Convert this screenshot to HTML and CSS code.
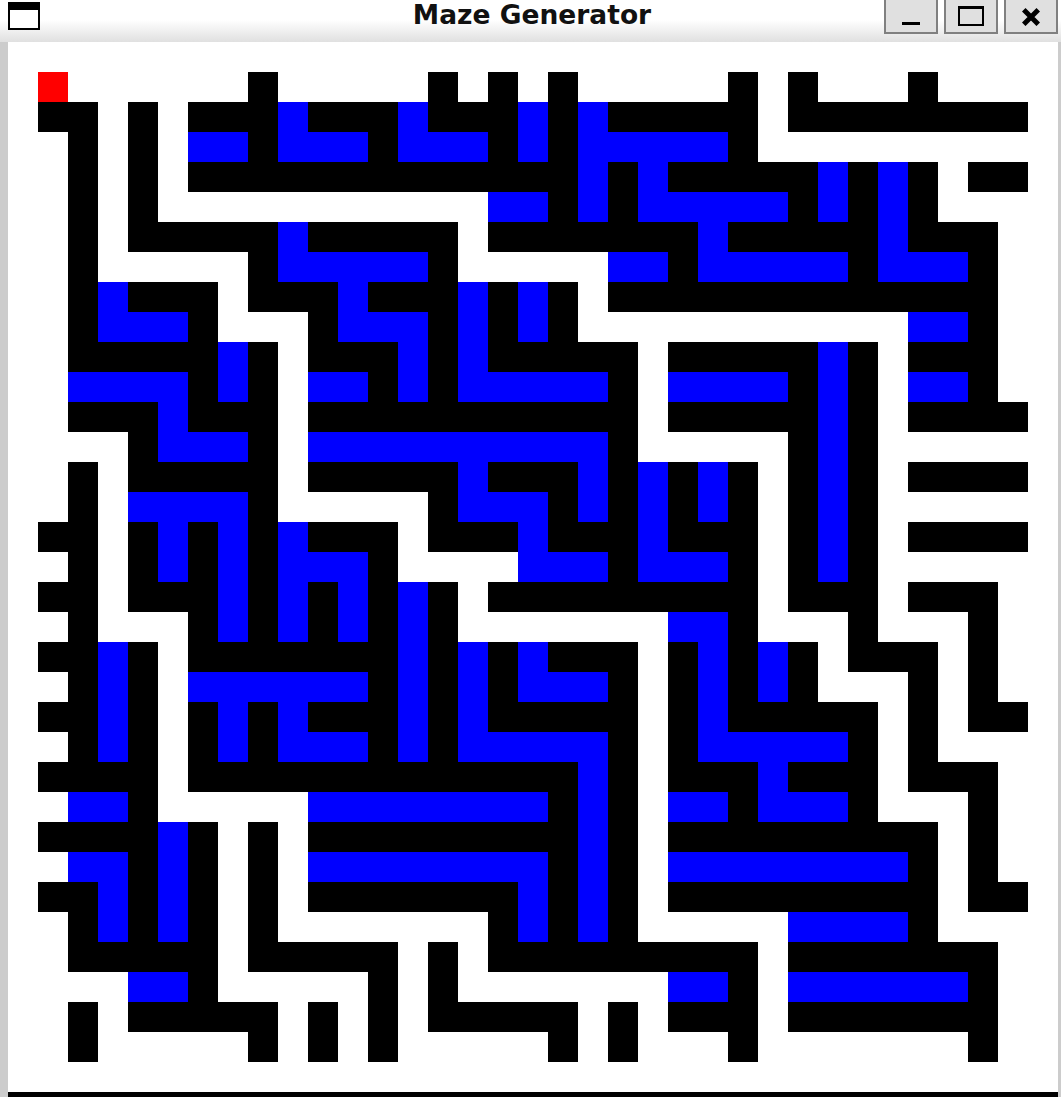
FILE: index.html
```html
<!DOCTYPE html>
<html lang="en">
<head>
    <meta charset="UTF-8">
    <meta name="viewport" content="width=device-width, initial-scale=1.0">
    <title>Maze Generator</title>
    <link rel="stylesheet" href="styles.css">
</head>
<body>
    <div class="window">
        <header class="titlebar">
            <svg class="window-icon" width="32" height="28" viewBox="0 0 32 28">
                <rect x="1" y="1" width="30" height="26" fill="#fff" stroke="#000" stroke-width="2"/>
                <rect x="0" y="0" width="32" height="8" fill="#000"/>
            </svg>
            <h1 class="title">Maze Generator</h1>
            <div class="controls">
                <button class="control">
                    <svg width="18" height="18" viewBox="0 0 18 18"><rect x="0" y="15" width="18" height="4"/></svg>
                </button>
                <button class="control">
                    <svg width="26" height="20" viewBox="0 0 26 20"><rect x="1" y="1" width="24" height="18" fill="none" stroke="#000" stroke-width="2"/><rect x="0" y="0" width="26" height="3"/></svg>
                </button>
                <button class="control">
                    <svg width="18" height="20" viewBox="0 0 18 20"><path d="M3.5 5.5 L14.5 16.5 M14.5 5.5 L3.5 16.5" stroke="#000" stroke-width="5" stroke-linecap="square" fill="none"/></svg>
                </button>
            </div>
        </header>
        <main class="content">
            <div class="canvas">
                <div class="maze" id="maze"></div>
            </div>
        </main>
    </div>
    <script src="maze.js"></script>
</body>
</html>
```

FILE: styles.css
```css
* {
    box-sizing: border-box;
}

body {
    margin: 0;
    height: 1097px;
    overflow: hidden;
    background-color: #fff;
    font-family: 'DejaVu Sans', Verdana, sans-serif;
}

.window {
    display: flex;
    flex-direction: column;
    height: 100%;
}

.titlebar {
    display: flex;
    align-items: flex-start;
    justify-content: space-between;
    position: relative;
    height: 42px;
    padding: 2px 0 0 8px;
    background: linear-gradient(to bottom, #fff 0, #fff 20px, #e0e0e0 42px);
}

.window-icon {
    display: block;
}

.title {
    position: absolute;
    left: 3px;
    right: 0;
    top: 0;
    margin: 0;
    text-align: center;
    font-size: 26.5px;
    line-height: 29px;
    font-weight: bold;
    color: #111;
}

.controls {
    display: flex;
    gap: 6px;
    margin-top: -2px;
    padding-right: 3px;
}

.control {
    display: flex;
    align-items: center;
    justify-content: center;
    width: 54px;
    height: 34px;
    padding: 0;
    border: 2px solid #808080;
    border-top: none;
    background-color: #e0e0e0;
}

.control svg {
    display: block;
}

.content {
    display: flex;
    flex: 1;
    border-left: 8px solid #ccc;
    border-right: 3px solid #ccc;
}

.canvas {
    flex: 1;
    padding: 30px 0 0 30px;
    background-color: #fff;
    border-bottom: 5px solid #000;
}

.maze {
    display: grid;
    grid-template-columns: repeat(33, 30px);
    grid-auto-rows: 30px;
}

.wall {
    background-color: #000;
}

.path {
    background-color: #00f;
}

.start {
    background-color: #f00;
}
```

FILE: maze.js
```js
// # wall, B solved path, R start, . open
const rows = [
    'R......#.....#.#.#.....#.#...#...',
    '##.#.###B###B###B#B#####.########',
    '.#.#.BB#BBB#BBB#B#BBBBB#.........',
    '.#.#.#############B#B#####B#B#.##',
    '.#.#...........BB#B#BBBBB#B#B#...',
    '.#.#####B#####.#######B#####B###.',
    '.#.....#BBBBB#.....BB#BBBBB#BBB#.',
    '.#B###.###B###B#B#.#############.',
    '.#BBB#...#BBB#B#B#...........BB#.',
    '.#####B#.###B#B#####.#####B#.###.',
    '.BBBB#B#.BB#B#BBBBB#.BBBB#B#.BB#.',
    '.###B###.###########.#####B#.####',
    '...#BBB#.BBBBBBBBBB#.....#B#.....',
    '.#.#####.#####B###B#B#B#.#B#.####',
    '.#.BBBB#.....#BBB#B#B#B#.#B#.....',
    '##.#B#B#B###.###B###B###.#B#.####',
    '.#.#B#B#BBB#....BBB#BBB#.#B#.....',
    '##.###B#B#B#B#.#########.###.###.',
    '.#...#B#B#B#B#.......BB#...#...#.',
    '##B#.#######B#B#B###.#B#B#.###.#.',
    '.#B#.BBBBBB#B#B#BBB#.#B#B#...#.#.',
    '##B#.#B#B###B#B#####.#B#####.#.##',
    '.#B#.#B#BBB#B#BBBBB#.#BBBBB#.#...',
    '####.#############B#.###B###.###.',
    '.BB#.....BBBBBBBB#B#.BB#BBB#...#.',
    '####B#.#.#########B#.#########.#.',
    '.BB#B#.#.BBBBBBBB#B#.BBBBBBBB#.#.',
    '##B#B#.#.#######B#B#.#########.##',
    '.#B#B#.#.......#B#B#.....BBBB#...',
    '.#####.#####.#.#########.#######.',
    '...BB#.....#.#.......BB#.BBBBBB#.',
    '.#.#####.#.#.#####.#.###.#######.',
    '.#.....#.#.#.....#.#...#.......#.'
];

const classNames = { '#': 'wall', 'B': 'path', 'R': 'start' };
const maze = document.getElementById('maze');

for (const row of rows) {
    for (const ch of row) {
        const cell = document.createElement('div');
        if (classNames[ch]) {
            cell.className = classNames[ch];
        }
        maze.appendChild(cell);
    }
}
```
